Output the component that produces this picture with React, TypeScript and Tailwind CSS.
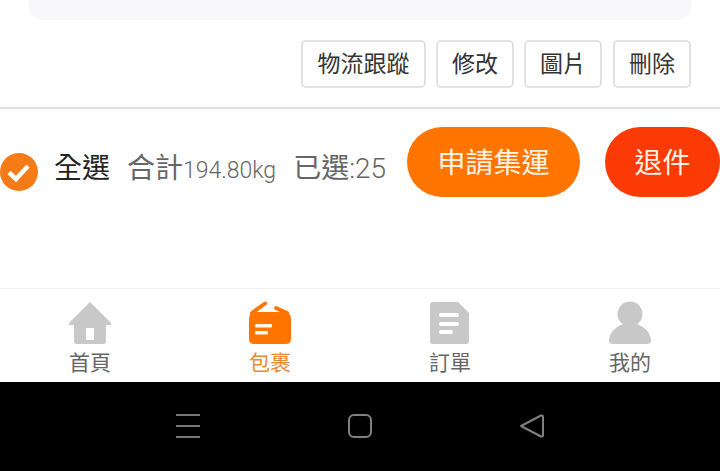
const cjk = "font-['Roboto','Noto_Sans_CJK_TC',sans-serif]";

function ActionButton({ label, width }: { label: string; width: string }) {
  return (
    <div className={`${width} h-12 flex items-center justify-center rounded-[5px] border-2 border-[#e2e2e2] bg-white text-[23px] leading-none text-[#333]`}>
      {label}
    </div>
  );
}

function HomeIcon() {
  return (
    <svg width="44" height="44" viewBox="0 0 44 44">
      <path fill="#c8c8c8" d="M22 1 L43 22 Q44 24 42 24 L38 24 L38 40 Q38 43 35 43 L9 43 Q6 43 6 40 L6 24 L2 24 Q0 24 1 22 Z" />
      <rect x="18" y="27" width="8" height="12" fill="#fff" />
    </svg>
  );
}

function PackageIcon() {
  return (
    <svg width="44" height="44" viewBox="0 0 44 44">
      <path fill="none" stroke="#ff7500" strokeWidth="4" strokeLinecap="round" d="M4 12 L17 2.5" />
      <path fill="none" stroke="#ff7500" strokeWidth="4" strokeLinecap="round" d="M28 7 L39 12" />
      <path fill="#ff7500" d="M6 11 L38 11 Q43 12 43 18 L43 38 Q43 43 38 43 L6 43 Q1 43 1 38 L1 18 Q1 12 6 11 Z" />
      <rect x="7" y="23" width="17" height="3.5" rx="1" fill="#fff" opacity="0.95" />
      <rect x="7" y="30" width="13" height="3.5" rx="1" fill="#fff" opacity="0.95" />
    </svg>
  );
}

function OrderIcon() {
  return (
    <svg width="44" height="44" viewBox="0 0 44 44">
      <path fill="#c8c8c8" d="M5 1 L30 1 L41 12 L41 40 Q41 43 38 43 L5 43 Q2 43 2 40 L2 4 Q2 1 5 1 Z" />
      <rect x="11" y="12" width="20" height="4" rx="2" fill="#fff" />
      <rect x="11" y="21" width="20" height="4" rx="2" fill="#fff" />
      <rect x="11" y="29" width="14" height="4" rx="2" fill="#fff" />
    </svg>
  );
}

function UserIcon() {
  return (
    <svg width="44" height="44" viewBox="0 0 44 44">
      <circle cx="22" cy="13" r="12.5" fill="#c8c8c8" />
      <path fill="#c8c8c8" d="M15 23 L29 23 Q43 29 43 40 Q43 43 39 43 L5 43 Q1 43 1 40 Q1 29 15 23 Z" />
    </svg>
  );
}

function Tab({ icon, label, active }: { icon: React.ReactNode; label: string; active?: boolean }) {
  return (
    <div className="w-[180px] flex flex-col items-center">
      <div className="h-[44px]">{icon}</div>
      <div className={`mt-[4px] text-[21px] leading-[28px] ${active ? "text-[#e88a35]" : "text-[#666]"}`}>{label}</div>
    </div>
  );
}

export default function App() {
  return (
    <div className={`w-[720px] h-[471px] overflow-hidden bg-white flex flex-col ${cjk}`}>
      <div className="h-[40px] shrink-0 px-[29px]">
        <div className="h-5 rounded-b-[12px] bg-[#f8f8fa]" />
      </div>

      <div className="h-[67px] shrink-0 pr-[29px] flex justify-end">
        <ActionButton label="物流跟蹤" width="w-[125px]" />
        <div className="w-[10px]" />
        <ActionButton label="修改" width="w-[78px]" />
        <div className="w-[10px]" />
        <ActionButton label="圖片" width="w-[78px]" />
        <div className="w-[11px]" />
        <ActionButton label="刪除" width="w-[78px]" />
      </div>

      <div className="h-[2px] shrink-0 bg-[#e0e0e0]" />

      <div className="h-[179px] shrink-0 pt-[18px] flex items-start">
        <div className="flex items-center h-[70px] w-[407px] shrink-0">
          <svg width="38" height="38" viewBox="0 0 38 38" className="shrink-0 mt-[20px]">
            <circle cx="19" cy="19" r="19" fill="#f47b16" />
            <path d="M9 19.5 L16 26 L28 13" fill="none" stroke="#fff" strokeWidth="4.5" />
          </svg>
          <span className="ml-[16px] mt-[13px] text-[28px] leading-none text-[#222] whitespace-nowrap">全選</span>
          <span className="ml-[17px] mt-[13px] text-[28px] leading-none text-[#666] whitespace-nowrap">合計</span>
          <span className="mt-[17px] text-[23px] leading-none text-[#666] whitespace-nowrap font-light">194.80kg</span>
          <span className="ml-[17px] mt-[13px] text-[28px] leading-none text-[#666] whitespace-nowrap">已選<span className="font-light">:25</span></span>
        </div>
        <div className="w-[173px] h-[70px] shrink-0 rounded-full bg-[#ff7500] text-[#fff3e6] text-[28px] flex items-center justify-center pt-[3px]">申請集運</div>
        <div className="ml-[25px] w-[115px] h-[70px] shrink-0 rounded-full bg-[#fb3a05] text-[#fff3e6] text-[28px] flex items-center justify-center pt-[3px]">退件</div>
      </div>

      <div className="h-[94px] shrink-0 border-t border-[#f2f2f2] pt-[12px] flex">
        <Tab icon={<HomeIcon />} label="首頁" />
        <Tab icon={<PackageIcon />} label="包裹" active />
        <Tab icon={<OrderIcon />} label="訂單" />
        <Tab icon={<UserIcon />} label="我的" />
      </div>

      <div className="flex-1 bg-black flex justify-center gap-[146px] pt-[31px]">
        <svg width="26" height="26" viewBox="0 0 26 26">
          <path d="M1 2 H25 M1 13 H25 M1 24 H25" stroke="#777" strokeWidth="2" />
        </svg>
        <svg width="26" height="26" viewBox="0 0 26 26">
          <rect x="2" y="2" width="22" height="22" rx="5" fill="none" stroke="#808080" strokeWidth="2" />
        </svg>
        <svg width="26" height="26" viewBox="0 0 26 26">
          <path d="M2 13 L22 2.5 Q24 2 24 4 L24 22 Q24 24 22 23.5 Z" fill="none" stroke="#808080" strokeWidth="2" strokeLinejoin="round" />
        </svg>
      </div>
    </div>
  );
}
